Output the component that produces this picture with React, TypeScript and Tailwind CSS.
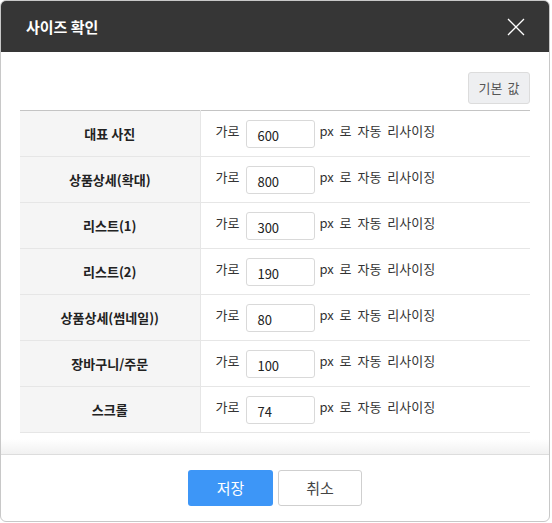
import React from 'react';

const rows = [
  { label: '대표 사진', value: '600' },
  { label: '상품상세(확대)', value: '800' },
  { label: '리스트(1)', value: '300' },
  { label: '리스트(2)', value: '190' },
  { label: '상품상세(썸네일))', value: '80' },
  { label: '장바구니/주문', value: '100' },
  { label: '스크롤', value: '74' },
];

const font = { fontFamily: '"Noto Sans CJK KR", "Noto Sans", sans-serif' };

export default function App() {
  return (
    <div className="w-[552px] h-[523px] bg-white" style={font}>
      <div className="w-[550px] h-[522px] border border-[#c8c8c8] rounded-[6px] overflow-hidden flex flex-col bg-white">
        {/* Header */}
        <div className="h-[51px] shrink-0 bg-[#363636] flex items-center justify-between pl-[25px] pr-[24px]">
          <h1 className="text-white text-[15px] font-bold leading-none">사이즈 확인</h1>
          <button className="w-[18px] h-[18px] flex items-center justify-center">
            <svg width="18" height="18" viewBox="0 0 18 18">
              <path d="M1 1 L17 17 M17 1 L1 17" stroke="#ffffff" strokeWidth="1.3" />
            </svg>
          </button>
        </div>

        {/* Body */}
        <div className="flex-1 flex flex-col px-[19px] pt-[20px]">
          <div className="flex justify-end">
            <button className="w-[62px] h-[32px] bg-[#eeeff1] border border-[#dcdcdc] rounded-[3px] text-[13px] text-[#555] [word-spacing:2px]">
              기본 값
            </button>
          </div>

          <table className="mt-[6px] w-full border-collapse border-t border-[#c4c4c4] text-[13px] text-[#333]">
            <tbody>
              {rows.map((r) => (
                <tr key={r.label} className="h-[46px] border-b border-[#e6e6e6]">
                  <th className="w-[180px] bg-[#f5f5f5] border-r border-[#e6e6e6] font-bold text-[13px] text-[#222] text-center">
                    {r.label}
                  </th>
                  <td className="pl-[15px]">
                    <div className="flex items-center">
                      <span className="mb-[5px]">가로</span>
                      <input
                        readOnly
                        value={r.value}
                        className="ml-[7px] w-[69px] h-[28px] border border-[#d9d9d9] rounded-[3px] px-[10px] pt-[3px] text-[13px] text-[#222] outline-none"
                        style={font}
                      />
                      <span className="ml-[4px] mb-[5px] [word-spacing:3px]">px 로 자동 리사이징</span>
                    </div>
                  </td>
                </tr>
              ))}
            </tbody>
          </table>

          <div className="flex-1" />
          <div className="h-[15px] -mx-[19px] bg-linear-to-b from-white to-[#f1f1f1]" />
        </div>

        {/* Footer */}
        <div className="h-[67px] shrink-0 border-t border-[#dddddd] flex justify-center pt-[15px] gap-[5px]">
          <button className="w-[85px] h-[36px] bg-[#3d96f7] rounded-[3px] text-white text-[15px]">저장</button>
          <button className="w-[84px] h-[36px] bg-white border border-[#cfcfcf] rounded-[3px] text-[#444] text-[15px]">취소</button>
        </div>
      </div>
    </div>
  );
}
